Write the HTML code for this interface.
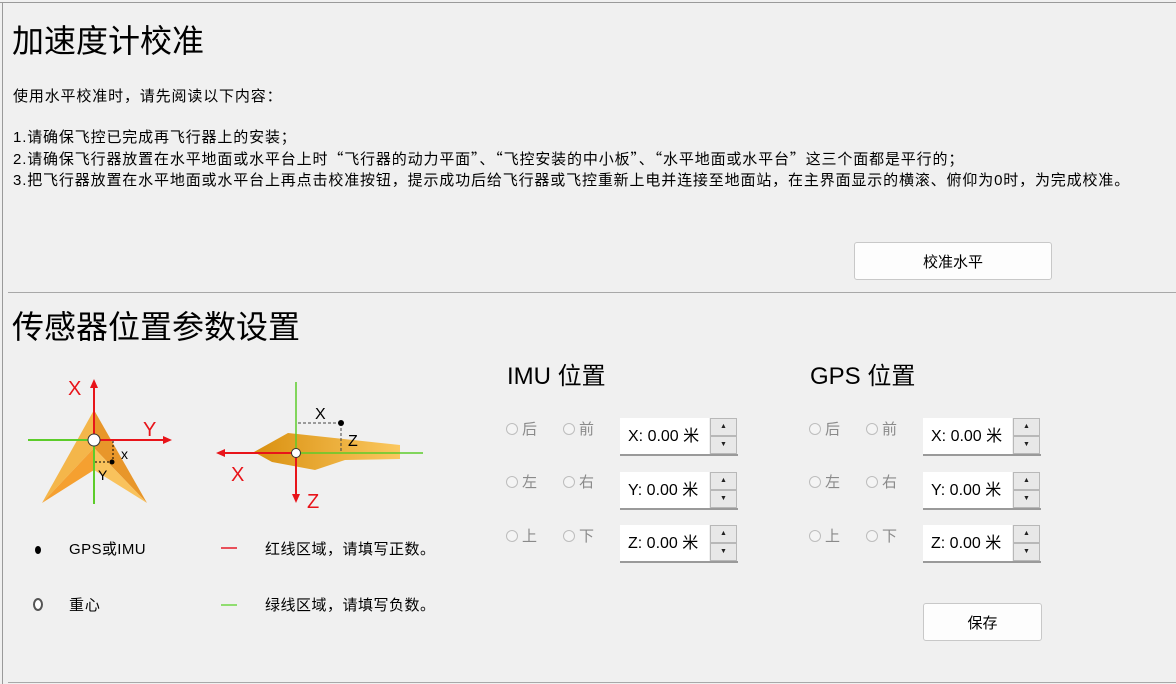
<!DOCTYPE html>
<html><head><meta charset="utf-8"><style>
*{margin:0;padding:0;box-sizing:border-box}
body{width:1176px;height:684px;background:#f0f0f0;position:relative;overflow:hidden;font-family:"Liberation Sans","Noto Sans CJK SC",sans-serif;color:#000}
.a{position:absolute;white-space:nowrap}
.h1{font-size:32px;line-height:38px}
.t{font-size:15px;line-height:20px;letter-spacing:0.85px}
.q{font-family:"Noto Sans CJK SC",sans-serif}
.h2{font-size:24px;line-height:30px}
.btn{position:absolute;background:#fdfdfd;border:1px solid #c8c8c8;border-radius:3px;font-size:15px;display:flex;align-items:center;justify-content:center}
.rad{position:absolute;font-size:15px;color:#8a8a8a;line-height:20px}
.rad i{display:inline-block;width:12px;height:12px;border:1px solid #bdbdbd;border-radius:50%;background:#f4f4f4;margin-right:4px;vertical-align:-1px}
.spin{position:absolute;width:118px;height:38px;border-bottom:2px solid #9a9a9a}
.spin .v{position:absolute;left:0;top:0;width:89px;height:36px;background:#fff;font-size:16px;line-height:38px;padding-left:8px}
.spin .u,.spin .d{position:absolute;left:90px;width:27px;height:18px;background:#e8e8e8;border:1px solid #b8b8b8;font-size:7px;text-align:center;line-height:16px;color:#222}
.spin .u{top:0}.spin .d{top:18px}
</style></head><body>
<div class="a" style="left:0;top:2px;width:1176px;height:1px;background:#9a9a9a"></div>
<div class="a" style="left:2px;top:2px;width:1px;height:682px;background:#9a9a9a"></div>
<div class="a" style="left:8px;top:292px;width:1168px;height:1px;background:#a8a8a8"></div>
<div class="a" style="left:8px;top:682px;width:1168px;height:1px;background:#a8a8a8"></div>

<div class="a h1" style="left:12px;top:22px">加速度计校准</div>
<div class="a t" style="left:13px;top:87px">使用水平校准时，请先阅读以下内容：</div>
<div class="a t" style="left:13px;top:128px">1.请确保飞控已完成再飞行器上的安装；</div>
<div class="a t" style="left:13px;top:149px">2.请确保飞行器放置在水平地面或水平台上时<span class="q">“</span>飞行器的动力平面<span class="q">”</span>、<span class="q">“</span>飞控安装的中小板<span class="q">”</span>、<span class="q">“</span>水平地面或水平台<span class="q">”</span>这三个面都是平行的；</div>
<div class="a t" style="left:13px;top:171px">3.把飞行器放置在水平地面或水平台上再点击校准按钮，提示成功后给飞行器或飞控重新上电并连接至地面站，在主界面显示的横滚、俯仰为0时，为完成校准。</div>
<div class="btn" style="left:854px;top:242px;width:198px;height:38px">校准水平</div>

<div class="a h1" style="left:12px;top:308px">传感器位置参数设置</div>

<svg class="a" style="left:0;top:360px" width="450" height="170" viewBox="0 360 450 170">
<polygon points="94,410 42,503 94,448" fill="#f4b64a"/>
<polygon points="94,410 147,503 94,448" fill="#e8962a"/>
<polygon points="94,448 42,503 94,470" fill="#f5a030"/>
<polygon points="94,448 147,503 94,470" fill="#f9c25c"/>
<line x1="28" y1="440" x2="94" y2="440" stroke="#5ccc2a" stroke-width="2"/>
<line x1="94" y1="440" x2="94" y2="504" stroke="#5ccc2a" stroke-width="2"/>
<line x1="94" y1="440" x2="94" y2="385" stroke="#e8141a" stroke-width="2"/>
<polygon points="94,379 90,388 98,388" fill="#e8141a"/>
<line x1="94" y1="440" x2="165" y2="440" stroke="#e8141a" stroke-width="2"/>
<polygon points="172,440 163,436 163,444" fill="#e8141a"/>
<line x1="113" y1="441" x2="113" y2="462" stroke="#000" stroke-dasharray="2,2"/>
<line x1="95" y1="462" x2="113" y2="462" stroke="#000" stroke-dasharray="2,2"/>
<circle cx="112" cy="462" r="2.5"/>
<circle cx="94" cy="440" r="6" fill="#fff" stroke="#333"/>
<text x="68" y="395" fill="#e8141a" font-size="20" font-family="Liberation Sans">X</text>
<text x="143" y="436" fill="#e8141a" font-size="20" font-family="Liberation Sans">Y</text>
<text x="121" y="459" font-size="14" font-family="Liberation Sans">x</text>
<text x="98" y="480" font-size="14" font-family="Liberation Sans">Y</text>
<defs><linearGradient id="g" x1="0" x2="1"><stop offset="0" stop-color="#d99010"/><stop offset="1" stop-color="#fbc860"/></linearGradient></defs>
<polygon points="254,452 288,433 400,445 400,459 345,460 315,470 272,462" fill="url(#g)"/>
<line x1="296" y1="382" x2="296" y2="453" stroke="#5ccc2a" stroke-width="1.5"/>
<line x1="296" y1="453" x2="423" y2="453" stroke="#5ccc2a" stroke-width="1.5"/>
<line x1="296" y1="453" x2="224" y2="453" stroke="#e8141a" stroke-width="2"/>
<polygon points="216,453 225,449 225,457" fill="#e8141a"/>
<line x1="296" y1="453" x2="296" y2="496" stroke="#e8141a" stroke-width="2"/>
<polygon points="296,503 292,494 300,494" fill="#e8141a"/>
<line x1="298" y1="423" x2="341" y2="423" stroke="#444" stroke-dasharray="3,2"/>
<line x1="341" y1="423" x2="341" y2="452" stroke="#444" stroke-dasharray="3,2"/>
<circle cx="341" cy="423" r="3"/>
<circle cx="296" cy="453" r="4.5" fill="#fff" stroke="#333"/>
<text x="315" y="419" font-size="16" font-family="Liberation Sans">X</text>
<text x="348" y="446" font-size="16" font-family="Liberation Sans">Z</text>
<text x="231" y="481" fill="#e8141a" font-size="20" font-family="Liberation Sans">X</text>
<text x="307" y="508" fill="#e8141a" font-size="20" font-family="Liberation Sans">Z</text>
</svg>

<div class="a" style="left:35px;top:546px;width:6px;height:8px;border-radius:50%;background:#000"></div>
<div class="a t" style="left:69px;top:540px;letter-spacing:0.4px">GPS或IMU</div>
<div class="a" style="left:221px;top:547px;width:16px;height:2px;background:#e8505a"></div>
<div class="a t" style="left:265px;top:540px;letter-spacing:0.5px">红线区域，请填写正数。</div>
<div class="a" style="left:33px;top:598px;width:10px;height:13px;border-radius:50%;border:2px solid #555;background:#fff"></div>
<div class="a t" style="left:69px;top:596px">重心</div>
<div class="a" style="left:221px;top:604px;width:16px;height:2px;background:#90dd70"></div>
<div class="a t" style="left:265px;top:596px;letter-spacing:0.5px">绿线区域，请填写负数。</div>

<div class="a h2" style="left:507px;top:362px">IMU 位置</div>
<div class="a h2" style="left:810px;top:362px">GPS 位置</div>

<div class="rad" style="left:506px;top:420px"><i></i>后</div>
<div class="rad" style="left:563px;top:420px"><i></i>前</div>
<div class="rad" style="left:506px;top:473px"><i></i>左</div>
<div class="rad" style="left:563px;top:473px"><i></i>右</div>
<div class="rad" style="left:506px;top:527px"><i></i>上</div>
<div class="rad" style="left:563px;top:527px"><i></i>下</div>
<div class="spin" style="left:620px;top:418px"><div class="v">X: 0.00 米</div><div class="u">▲</div><div class="d">▼</div></div>
<div class="spin" style="left:620px;top:472px"><div class="v">Y: 0.00 米</div><div class="u">▲</div><div class="d">▼</div></div>
<div class="spin" style="left:620px;top:525px"><div class="v">Z: 0.00 米</div><div class="u">▲</div><div class="d">▼</div></div>

<div class="rad" style="left:809px;top:420px"><i></i>后</div>
<div class="rad" style="left:866px;top:420px"><i></i>前</div>
<div class="rad" style="left:809px;top:473px"><i></i>左</div>
<div class="rad" style="left:866px;top:473px"><i></i>右</div>
<div class="rad" style="left:809px;top:527px"><i></i>上</div>
<div class="rad" style="left:866px;top:527px"><i></i>下</div>
<div class="spin" style="left:923px;top:418px"><div class="v">X: 0.00 米</div><div class="u">▲</div><div class="d">▼</div></div>
<div class="spin" style="left:923px;top:472px"><div class="v">Y: 0.00 米</div><div class="u">▲</div><div class="d">▼</div></div>
<div class="spin" style="left:923px;top:525px"><div class="v">Z: 0.00 米</div><div class="u">▲</div><div class="d">▼</div></div>

<div class="btn" style="left:923px;top:603px;width:119px;height:38px">保存</div>
</body></html>
